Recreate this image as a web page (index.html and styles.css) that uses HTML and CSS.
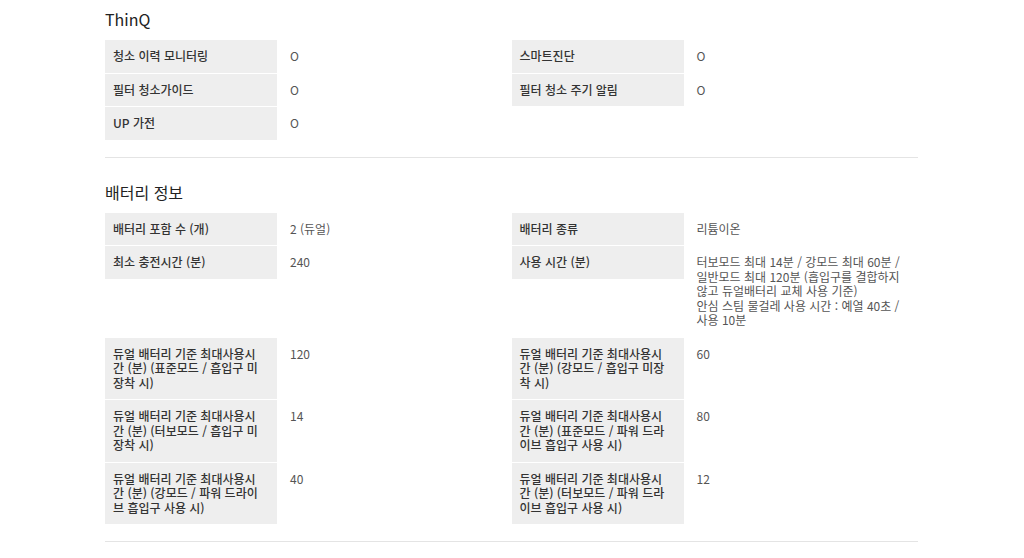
FILE: index.html
```html
<!DOCTYPE html>
<html lang="ko">
<head>
<meta charset="utf-8">
<link rel="stylesheet" href="styles.css">
</head>
<body>
<div class="page">
  <section class="spec">
    <h3 class="spec-title">ThinQ</h3>
    <div class="spec-grid">
      <div class="item"><div class="label">청소 이력 모니터링</div><div class="value">O</div></div>
      <div class="item"><div class="label">스마트진단</div><div class="value">O</div></div>
      <div class="item"><div class="label">필터 청소가이드</div><div class="value">O</div></div>
      <div class="item"><div class="label">필터 청소 주기 알림</div><div class="value">O</div></div>
      <div class="item"><div class="label">UP 가전</div><div class="value">O</div></div>
    </div>
  </section>
  <section class="spec">
    <h3 class="spec-title">배터리 정보</h3>
    <div class="spec-grid">
      <div class="item"><div class="label">배터리 포함 수 (개)</div><div class="value">2 (듀얼)</div></div>
      <div class="item"><div class="label">배터리 종류</div><div class="value">리튬이온</div></div>
      <div class="item"><div class="label">최소 충전시간 (분)</div><div class="value">240</div></div>
      <div class="item"><div class="label">사용 시간 (분)</div><div class="value">터보모드 최대 14분 / 강모드 최대 60분 / 일반모드 최대 120분 (흡입구를 결합하지 않고 듀얼배터리 교체 사용 기준)<br>안심 스팀 물걸레 사용 시간 : 예열 40초 / 사용 10분</div></div>
      <div class="item"><div class="label">듀얼 배터리 기준 최대사용시간 (분) (표준모드 / 흡입구 미장착 시)</div><div class="value">120</div></div>
      <div class="item"><div class="label">듀얼 배터리 기준 최대사용시간 (분) (강모드 / 흡입구 미장착 시)</div><div class="value">60</div></div>
      <div class="item"><div class="label">듀얼 배터리 기준 최대사용시간 (분) (터보모드 / 흡입구 미장착 시)</div><div class="value">14</div></div>
      <div class="item"><div class="label">듀얼 배터리 기준 최대사용시간 (분) (표준모드 / 파워 드라이브 흡입구 사용 시)</div><div class="value">80</div></div>
      <div class="item"><div class="label">듀얼 배터리 기준 최대사용시간 (분) (강모드 / 파워 드라이브 흡입구 사용 시)</div><div class="value">40</div></div>
      <div class="item"><div class="label">듀얼 배터리 기준 최대사용시간 (분) (터보모드 / 파워 드라이브 흡입구 사용 시)</div><div class="value">12</div></div>
    </div>
  </section>
</div>
</body>
</html>
```

FILE: styles.css
```css
html, body {
  margin: 0;
  padding: 0;
  background: #ffffff;
}

body {
  font-family: "Noto Sans CJK KR", "Noto Sans", sans-serif;
  color: #333333;
}

.page {
  width: 813px;
  margin: 0 0 0 105px;
  padding-top: 7px;
}

.spec {
  border-bottom: 1px solid #e4e4e4;
  padding-bottom: 16px;
  margin-bottom: 22px;
}

.spec-title {
  margin: 0 0 9px 0;
  font-size: 16px;
  line-height: 24px;
  font-weight: 400;
  color: #222222;
}

.spec-grid {
  display: grid;
  grid-template-columns: 1fr 1fr;
  column-gap: 0;
}

.item {
  display: flex;
  align-items: flex-start;
  border-bottom: 1px solid #ffffff;
}

.label {
  flex: 0 0 172px;
  box-sizing: border-box;
  width: 172px;
  padding: 9px 16px 9px 8px;
  background: #eeeeee;
  font-size: 12px;
  line-height: 14.5px;
  font-weight: 500;
  color: #333333;
}

.value {
  flex: 1;
  padding: 9px 14px 9px 13px;
  font-size: 12px;
  line-height: 14.5px;
  color: #555555;
}
```
